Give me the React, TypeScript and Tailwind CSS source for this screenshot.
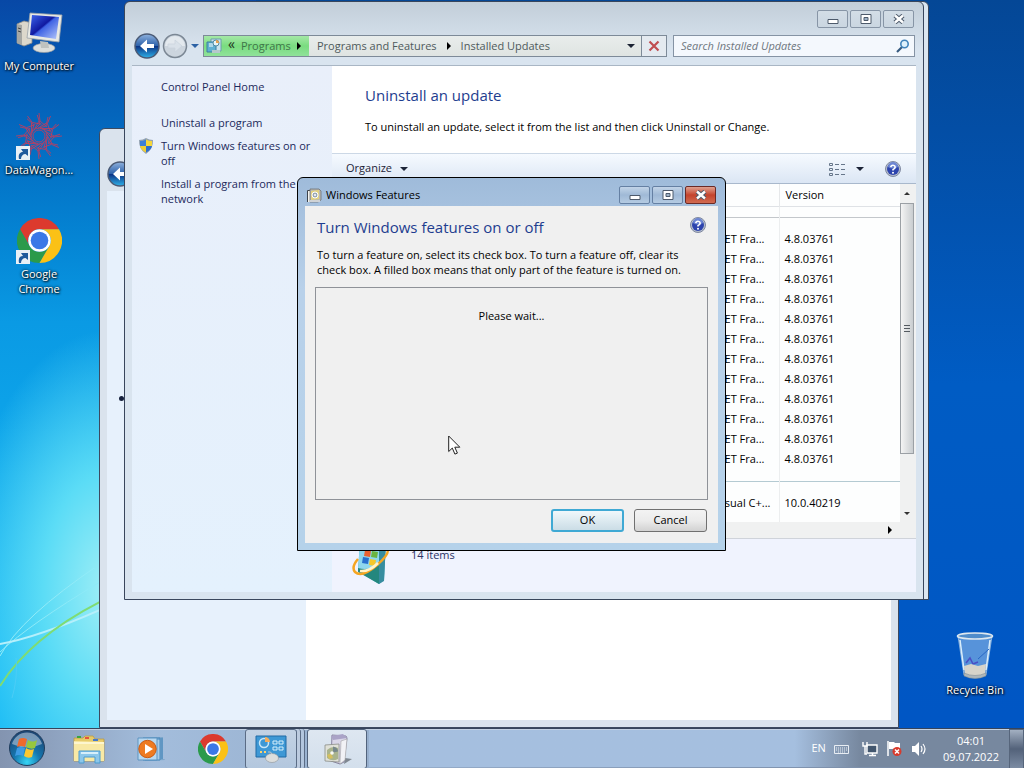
import React from "react";

const updates = Array.from({ length: 12 }, (_, i) => ({
  id: i,
  name: ".NET Fra...",
  version: "4.8.03761",
}));

const Chrome: React.FC<{ className: string }> = ({ className }) => (
  <svg viewBox="0 0 48 48" className={className}>
    <path fill="#dc3a2e" d="M24 12H44.8A24 24 0 0 0 3.2 12L13.6 30A12 12 0 0 1 24 12z" />
    <path fill="#2b9a4b" d="M13.6 30L3.2 12A24 24 0 0 0 24 48L34.4 30A12 12 0 0 1 13.6 30z" />
    <path fill="#fbc116" d="M34.4 30L24 48A24 24 0 0 0 44.8 12H24A12 12 0 0 1 34.4 30z" />
    <circle cx="24" cy="24" r="12" fill="#fff" />
    <circle cx="24" cy="24" r="9.4" fill="#3b78e7" />
  </svg>
);

const Computer = () => (
  <svg viewBox="0 0 48 44" className="h-11 w-12">
    <defs>
      <linearGradient id="screen" x1="0" y1="0" x2="1" y2="1">
        <stop offset="0" stopColor="#3d66ee" />
        <stop offset=".45" stopColor="#1019a0" />
        <stop offset=".5" stopColor="#3f63e4" />
        <stop offset="1" stopColor="#b7c9fb" />
      </linearGradient>
    </defs>
    <path d="M2 14l7-3 8 2v20l-8 3-7-3z" fill="#dcd8cc" stroke="#8e8c86" strokeWidth=".8" />
    <path d="M2 14l5 1v20l-5-2z" fill="#a5a7a4" />
    <path d="M3 18l3 1M3 21l3 1" stroke="#444" />
    <ellipse cx="29" cy="38" rx="11" ry="4.500" fill="#dcdedb" stroke="#999" strokeWidth=".6" />
    <path d="M25 31l8 1 1 6h-8z" fill="#bfc2bf" />
    <path d="M15 3l32 2-3 27-32-4z" fill="#e8e9e4" stroke="#9ba2a8" strokeWidth=".8" />
    <path d="M17 5l27 2-3 22-26-4z" fill="url(#screen)" />
  </svg>
);

const Rosette = () => (
  <svg viewBox="0 0 48 48" className="h-12 w-12" fill="none" stroke="#c43c5c" strokeWidth=".8">
    {Array.from({ length: 12 }, (_, i) => (
      <g key={i} transform={`rotate(${i * 30} 24 24)`}>
        <path d="M24 1l1 8 7 6M24 9l-5 9M21 17l10-3 2-9" />
      </g>
    ))}
    <circle cx="24" cy="24" r="6" />
  </svg>
);

const Shortcut = () => (
  <svg viewBox="0 0 14 14" className="absolute bottom-0 left-px h-3.5 w-3.5">
    <path d="M0 0h14v14H0z" fill="#e9f0f6" />
    <path d="M3 13C2 8 4 6 7 6L5 3h7v7L9.500 8C7 8 5 10 5 13z" fill="#1f5a9c" />
  </svg>
);

const Bin = () => (
  <svg viewBox="0 0 38 48" className="h-12 w-[38px]">
    <path d="M2 4l6 39q11 6 22 0l6-39z" fill="#9fc4ec" fillOpacity=".55" stroke="#9fc0e0" strokeWidth=".8" />
    <path d="M4 8l4 30M34 8l-4 30" stroke="#d9edfa" strokeWidth="1.500" />
    <path d="M22 27l11-10" stroke="#2867c5" fill="none" />
    <path d="M10 31l4-5 3 6 5-2" stroke="#4a4fc5" strokeWidth="1.500" fill="none" />
    <path d="M8 34l7-2 7 2 8-2-1 11q-11 5-20 0z" fill="#d7d4ca" />
    <path d="M8 41q11 5 22 0v3q-11 5-22 0z" fill="#aeb7bb" stroke="#77848e" strokeWidth=".5" />
    <ellipse cx="19" cy="4" rx="17.500" ry="3" fill="#4f8ccb" stroke="#dde7ef" strokeWidth="1.600" />
  </svg>
);

const Shield = () => (
  <svg viewBox="0 0 16 16" className="h-4 w-4">
    <path d="M8 0q3 2 7 2 .5 9-7 14Q.5 11 1 2q4 0 7-2z" fill="#93a2b2" />
    <path d="M8 1.500V8H2V3q3 0 6-1.500z" fill="#3d7fd8" />
    <path d="M8 1.500V8h6V3q-3 0-6-1.500z" fill="#f5d63b" />
    <path d="M8 8v6.500Q3 12 2 8z" fill="#f0cf35" />
    <path d="M8 8v6.500Q13 12 14 8z" fill="#2e6ecb" />
  </svg>
);

const Help = () => (
  <svg viewBox="0 0 16 16" className="h-4 w-4">
    <circle cx="8" cy="8" r="7.500" fill="#b7bfce" stroke="#7e88a0" />
    <circle cx="8" cy="8" r="6" fill="#2d44ad" />
    <path d="M3 6a5 5 0 0 1 10 0q-5 3-10 0z" fill="#6d86d3" />
    <path d="M5.800 6.200Q6 4.200 8 4.200t2.200 1.800Q10.200 7.400 8 8.600V9.500" stroke="#fff" strokeWidth="1.600" fill="none" />
    <circle cx="8" cy="11.700" r="1" fill="#fff" />
  </svg>
);

const ProgramBox: React.FC<{ className: string }> = ({ className }) => (
  <svg viewBox="0 0 32 32" className={className}>
    <path d="M24 25l7 1-8 5z" fill="#7f8791" />
    <path d="M11 2l14 1 1 2-3 24-4 2-9-3z" fill="#d9d6e8" stroke="#7e7996" strokeWidth=".9" />
    <path d="M10 3l12-2 4 4-14 2z" fill="#aaa3c7" />
    <path d="M20 8l6-2-2 21-5 4z" fill="#f2f2f6" stroke="#999" strokeWidth=".5" />
    <path d="M4 12l14-1v18l-14-1z" fill="#e0e1d8" stroke="#8a8d88" strokeWidth=".8" />
    <path d="M6 17q5-5 11-2v11q-6 3-11-1z" fill="#a9b38d" />
    <path d="M12 13.500q5 1 5 5l-5 1z" fill="#76878b" />
    <path d="M6 22l4-2 2 5-4 1z" fill="#d4bf5e" />
    <circle cx="11" cy="20" r="1.800" fill="#f8f8f4" />
  </svg>
);

const FeaturesIcon = () => (
  <svg viewBox="0 0 16 16" className="h-4 w-4">
    <path d="M1.500 15V3.500h9V15" fill="#f4f4f0" stroke="#3e444c" />
    <path d="M4 2h9l2 2v9l-3 2H4z" fill="#b9b8b3" stroke="#6e7274" strokeWidth=".8" />
    <path d="M5 4l8-1v9l-8 1z" fill="#e3d27f" />
    <circle cx="9" cy="8" r="3" fill="#9aa8b5" stroke="#fff" />
    <circle cx="9" cy="8" r="1" fill="#fff" />
    <path d="M4 13h10v2H3z" fill="#d0d3d6" />
  </svg>
);

const PanelIcon = () => (
  <svg viewBox="0 0 16 16" className="h-4 w-4">
    <path d="M5 1h10v12H5z" fill="#c9e3ee" stroke="#6d9cac" />
    <path d="M1 4h9v10H1z" fill="#5fb0d2" stroke="#3f7fa0" />
    <path d="M3 6h6M3 8h4" stroke="#fff" />
    <circle cx="10" cy="5" r="3" fill="#e8f5f8" stroke="#508aa3" />
    <path d="M10 5V2a3 3 0 0 1 3 3z" fill="#e9a24e" />
    <path d="M6 12h8v3H6z" fill="#b5c9cc" />
  </svg>
);

const Updates = () => (
  <svg viewBox="0 0 40 46" className="h-[46px] w-10">
    <path d="M9 2l26 1-2 38-5 4L7 32z" fill="#3ca1b5" />
    <path d="M9 2l19 2v41L7 32z" fill="#8fd8ee" />
    <path d="M7 29q10 3 21-3v19L7 33z" fill="#24877e" />
    <path d="M28 4l7-1-2 39-5 3z" fill="#378da0" />
    <path d="M14 11l6 1-1 6-6-1z" fill="#ea6332" />
    <path d="M21 12l6 1-1 6-6-1z" fill="#6bb441" />
    <path d="M12 18l6 1-1 6-6-1z" fill="#2870ce" />
    <path d="M19 20l6 1-1 6-6-1z" fill="#f4c72b" />
    <path d="M7 20Q0 28 4 33q7 6 22-7 14-12 10-17-1-2-5-2" fill="none" stroke="#f5a623" strokeWidth="2.500" />
    <path d="M9 32q9 1 18-8" fill="none" stroke="#fff3c9" strokeWidth="2.500" />
  </svg>
);

const StartOrb = () => (
  <svg viewBox="0 0 38 38" className="h-[38px] w-[38px]">
    <defs>
      <radialGradient id="orb" cx=".5" cy=".9" r=".85">
        <stop offset="0" stopColor="#35d5f5" />
        <stop offset=".45" stopColor="#1576ae" />
        <stop offset="1" stopColor="#1c4675" />
      </radialGradient>
    </defs>
    <circle cx="19" cy="19" r="17.500" fill="url(#orb)" stroke="#203c5c" />
    <path d="M4 15a15.500 15.500 0 0 1 30 0q-15 7-30 0z" fill="#c6d5e4" fillOpacity=".55" />
    <path d="M11 10q4-2 8 0l-2 8q-4-2-8 0z" fill="#ee6a2c" />
    <path d="M20 11q5 3 9 0l-2 8q-4 2-9-1z" fill="#97c83e" />
    <path d="M9 19q4-2 8 0l-2 8q-4-2-8 0z" fill="#3e9be4" />
    <path d="M18 19q4 3 8 1l-2 8q-4 2-8-1z" fill="#fbc831" />
  </svg>
);

const Explorer = () => (
  <svg viewBox="0 0 32 30" className="h-[30px] w-8">
    <path d="M1 4h9l2-2h8l2 3h9v22H1z" fill="#e6ca69" stroke="#b89a47" strokeWidth=".8" />
    <path d="M4 2h4v2H4z" fill="#3ba33f" />
    <path d="M12 3h4v2h-4z" fill="#e4553c" />
    <path d="M20 5h5v2h-5z" fill="#4479cd" />
    <path d="M1 7l30 1v19H1z" fill="#f8e9a5" />
    <path d="M1 9h30" stroke="#fdf6cf" strokeWidth="2" />
    <path d="M6 17h21v12h-5v-6H11v6H6z" fill="#8cc7ea" stroke="#4b9bd0" />
    <path d="M8 19h17" stroke="#d6effb" strokeWidth="2" />
  </svg>
);

const MediaPlayer = () => (
  <svg viewBox="0 0 28 26" className="h-[26px] w-7">
    <path d="M8 2l18-1v22l4 1-22 1z" fill="#7ba6cb" />
    <path d="M6 2h17v22H6zM20 3h3M25 2v21" fill="#a8cce9" stroke="#4787bb" />
    <path d="M1 2h19v22H1z" fill="#b8d8f0" stroke="#5d94c1" />
    <circle cx="10.500" cy="13" r="8.700" fill="#ee7b22" stroke="#c85c16" />
    <path d="M8 8l8 5-8 5z" fill="#fff" />
  </svg>
);

const ControlPanel = () => (
  <svg viewBox="0 0 32 30" className="h-[30px] w-8">
    <path d="M1 2h30v21H1z" fill="#3e98d5" stroke="#206aa5" />
    <circle cx="9" cy="9" r="4.500" fill="none" stroke="#c7e6f8" strokeWidth="1.500" />
    <path d="M10 8V3a5 5 0 0 1 5 5z" fill="#f3ad5d" />
    <path d="M5 18h2M9 18h2" stroke="#ffd36c" strokeWidth="2" />
    <path d="M18 7h4v3h-4zM24 7h4v3h-4zM18 13h4v3h-4zM24 13h4v3h-4z" fill="none" stroke="#d5effb" />
    <ellipse cx="17" cy="24" rx="6.500" ry="4.500" fill="#dcdedd" stroke="#8d9499" strokeWidth=".6" />
    <path d="M17 20q-1-3-4-2" stroke="#c2c6c8" fill="none" />
  </svg>
);

const BackArrow = () => (
  <svg viewBox="0 0 26 26" className="h-[26px] w-[26px]">
    <defs>
      <linearGradient id="nav" x1="0" y1="0" x2="0" y2="1">
        <stop offset="0" stopColor="#8fb2de" />
        <stop offset=".48" stopColor="#2f63ab" />
        <stop offset=".52" stopColor="#0c3586" />
        <stop offset="1" stopColor="#2fb3ea" />
      </linearGradient>
    </defs>
    <circle cx="13" cy="13" r="12" fill="url(#nav)" stroke="#4b5b76" strokeWidth="1.500" />
    <path d="M6 13l7-6.500v4.500h7v4h-7v4.500z" fill="#fff" />
  </svg>
);

const ForwardArrow = () => (
  <svg viewBox="0 0 26 26" className="h-[26px] w-[26px]">
    <circle cx="13" cy="13" r="11.500" fill="#ccd5de" stroke="#7b8794" strokeWidth="1.500" />
    <path d="M3 13a10 10 0 0 1 20 0z" fill="#e3e9ee" />
    <path d="M20 13l-7-6v4H6v4h7v4z" fill="#d9e1e9" stroke="#c8d2dc" strokeWidth=".7" />
  </svg>
);

const Caret: React.FC<{ className?: string }> = ({ className }) => (
  <svg viewBox="0 0 8 4" className={`h-1 w-2 ${className ?? ""}`}>
    <path d="M0 0h8L4 4z" fill="currentColor" />
  </svg>
);

const ScrollCaret: React.FC<{ className?: string }> = ({ className }) => (
  <svg viewBox="0 0 6 3" className={`h-[3px] w-1.5 text-[#333] ${className ?? ""}`}>
    <path d="M0 0h6L3 3z" fill="currentColor" />
  </svg>
);

const RightCaret = () => (
  <svg viewBox="0 0 4 8" className="h-2 w-1">
    <path d="M0 0v8l4-4z" fill="#000" />
  </svg>
);

const captionTones = {
  idle: "border-[#8795a6] bg-linear-to-b from-[#d3dde6] to-[#cad6e1]",
  active: "border-[#6580a3] bg-linear-to-b from-[#c2d4e8] via-[#9fb9d6] to-[#b5cbe2]",
  close: "border-[#6b2a26] bg-linear-to-b from-[#dea090] via-[#c4432d] to-[#d06a50]",
};

const CaptionButtons: React.FC<{ active?: boolean }> = ({ active }) => {
  const tone = active ? captionTones.active : captionTones.idle;
  const base = "flex h-[18px] w-[31px] items-center justify-center rounded-[2px] border";
  return (
    <div className="flex gap-0.5">
      <button aria-label="Minimize" className={`${base} ${tone}`}>
        <svg viewBox="0 0 12 10" className="h-2.5 w-3">
          <path d="M1 5.500h10v4H1z" fill="#fff" stroke="#4d5a6b" />
        </svg>
      </button>
      <button aria-label="Maximize" className={`${base} ${tone}`}>
        <svg viewBox="0 0 12 10" className="h-2.5 w-3">
          <path d="M1 .5h10v9H1z" fill="#fff" stroke="#4d5a6b" />
          <path d="M4 3.500h4v3H4z" fill="#9fb3c8" stroke="#4d5a6b" />
        </svg>
      </button>
      <button aria-label="Close" className={`${base} ${active ? captionTones.close : tone}`}>
        <svg viewBox="0 0 12 10" className="h-2.5 w-3">
          <path d="M2 1.500l8 7M10 1.500l-8 7" stroke="#4d5a6b" strokeWidth="4.500" />
          <path d="M2 1.500l8 7M10 1.500l-8 7" stroke="#fff" strokeWidth="2.400" />
        </svg>
      </button>
    </div>
  );
};

const DesktopIcon: React.FC<{
  label: string;
  shortcut?: boolean;
  children: React.ReactNode;
}> = ({ label, shortcut, children }) => (
  <button className="flex h-[104px] w-[78px] flex-col items-center">
    <span className="relative flex h-12 w-12 items-center justify-center">
      {children}
      {shortcut && <Shortcut />}
    </span>
    <span className="mt-0.5 text-center text-[11px] leading-[15px] whitespace-pre-line text-white [text-shadow:1px_1px_2px_#000,0_0_3px_#000]">
      {label}
    </span>
  </button>
);

const Wallpaper = () => (
  <div className="absolute inset-0 bg-linear-to-b from-[#044796] via-[#005cc4] to-[#0055c4]">
    <div className="absolute inset-y-0 left-0 w-1/4 bg-linear-to-b from-[#0848a6] via-[#0a9ae4] via-42% to-[#14b8f5] to-85%" />
    <div className="absolute inset-y-0 left-0 w-1/4 bg-[radial-gradient(ellipse_150px_260px_at_110px_590px,#a2eff6,#5bdcf6_45%,transparent)]" />
    <svg viewBox="0 0 100 200" className="absolute bottom-0 left-0 h-[200px] w-[100px]" fill="none">
      <path d="M0 84Q30 56 100 14" stroke="#8deaf8" />
      <path d="M0 88Q20 50 100 -4" stroke="#92ebf8" />
      <path d="M0 76Q36 70 100 42" stroke="#b5effb" strokeWidth="2" />
      <path d="M0 118Q30 70 100 34" stroke="#7fdc72" strokeWidth="2" />
      <path d="M12 130Q18 110 16 90" stroke="#4bcdf6" />
    </svg>
  </div>
);

const BackWindow = () => (
  <section className="absolute top-32 right-[125px] bottom-10 left-[99px] flex flex-col rounded-t-md border border-[#3d4a60] bg-[#dae3ed] p-[7px] pt-8">
    <div className="flex">
      <BackArrow />
    </div>
    <div className="mt-1 flex flex-1">
      <div className="w-[199px] bg-[#e7f1fc]" />
      <div className="flex-1 bg-white" />
    </div>
    <span className="absolute top-[267px] left-[19px] h-[5px] w-[5px] rounded-full bg-[#16203c]" />
  </section>
);

const sideLinks = [
  { label: "Uninstall a program", shield: false },
  { label: "Turn Windows features on or off", shield: true },
  { label: "Install a program from the network", shield: false },
];

const Sidebar = () => (
  <nav className="w-[200px] shrink-0 bg-linear-to-b from-[#e9effa] to-[#e4f1fd] pt-[13px] pr-2 text-[#1c2a5c]">
    <a href="#home" className="ml-[29px] block leading-[15px]">
      Control Panel Home
    </a>
    <ul className="mt-[21px] flex flex-col gap-2">
      {sideLinks.map(({ label, shield }) => (
        <li key={label} className="flex">
          <span className="w-[29px] shrink-0 pl-1.5">{shield && <Shield />}</span>
          <a href="#task" className="w-[160px] leading-[15px]">
            {label}
          </a>
        </li>
      ))}
    </ul>
  </nav>
);

const AddressBar = () => (
  <div className="flex items-center pr-px pl-0.5">
    <button aria-label="Back">
      <BackArrow />
    </button>
    <button aria-label="Forward" className="ml-0.5">
      <ForwardArrow />
    </button>
    <button aria-label="Recent pages" className="mr-1 ml-[3px] text-[#2d62a5]">
      <Caret />
    </button>
    <div className="flex h-[22px] flex-1 border border-[#7d8a98] bg-linear-to-b from-[#e9edec] to-[#dfe4e2] text-[#4f5a5c]">
      <div className="flex w-[105px] items-center gap-1.5 bg-linear-to-b from-[#a4e8a6] via-[#79dc7f] to-[#90e29a] pl-0.5">
        <PanelIcon />
        <span className="-mt-1 text-[14px] leading-4 text-[#1f3322]">«</span>
        <button className="text-[#3f7549]">Programs</button>
        <RightCaret />
      </div>
      <div className="flex flex-1 items-center gap-2.5 pl-2">
        <button>Programs and Features</button>
        <RightCaret />
        <button>Installed Updates</button>
      </div>
      <button aria-label="Previous locations" className="px-1.5 text-[#1b2333]">
        <Caret />
      </button>
      <button aria-label="Stop" className="flex w-[25px] items-center justify-center border-l border-[#7d8a98] bg-[#e4eaf0]">
        <svg viewBox="0 0 12 12" className="h-3 w-3">
          <path d="M1.500 1.500l9 9M10.500 1.500l-9 9" stroke="#c04d50" strokeWidth="2.200" />
        </svg>
      </button>
    </div>
    <label className="ml-1.5 flex h-[22px] w-[242px] items-center border border-[#8593a4] bg-[#f4f8fd] pr-1 pl-[7px]">
      <input
        aria-label="Search Installed Updates"
        placeholder="Search Installed Updates"
        className="min-w-0 flex-1 italic outline-none placeholder:text-[#6f7780]"
      />
      <svg viewBox="0 0 14 14" className="h-3.5 w-3.5" fill="none">
        <path d="M6 8l-5 5" stroke="#35597f" strokeWidth="2.200" />
        <circle cx="8.500" cy="5" r="3.700" fill="#dff1fb" stroke="#4183ba" strokeWidth="1.600" />
      </svg>
    </label>
  </div>
);

const UpdateTable = () => (
  <table className="w-full border-collapse">
    <thead>
      <tr className="h-[22px] border-b border-[#dfe2e6]">
        <th aria-label="Program" />
        <th className="w-[121px] border-l border-[#e6e8ea] pl-1.5 text-left font-normal">Version</th>
      </tr>
    </thead>
    <tbody>
      <tr className="h-[11px] border-b border-[#c3c7cb]">
        <td />
        <td className="border-l border-[#eceeef]" />
      </tr>
      <tr className="h-3">
        <td />
        <td className="border-l border-[#eceeef]" />
      </tr>
      {updates.map(({ id, name, version }) => (
        <tr key={id} className="h-5">
          <td className="pr-3.5 text-right">{name}</td>
          <td className="border-l border-[#eceeef] pl-[5px]">{version}</td>
        </tr>
      ))}
      <tr className="h-3 border-b border-[#b4cad2]">
        <td />
        <td className="border-l border-[#eceeef]" />
      </tr>
      <tr className="h-3">
        <td />
        <td className="border-l border-[#eceeef]" />
      </tr>
      <tr className="h-5">
        <td className="pr-2 text-right">Visual C+...</td>
        <td className="border-l border-[#eceeef] pl-[5px]">10.0.40219</td>
      </tr>
      <tr className="h-[9px]">
        <td />
        <td className="border-l border-[#eceeef]" />
      </tr>
    </tbody>
  </table>
);

const UpdatesWindow = () => (
  <section className="absolute top-px right-[100px] left-[124px] flex h-[599px] flex-col rounded-t-md border border-[#39465c] bg-linear-to-b from-[#c2ced9] to-[#d9e4ef] to-8% px-[7px] pb-[7px]">
    <header className="flex h-[31px] justify-end pt-2 pr-0.5">
      <CaptionButtons />
    </header>
    <AddressBar />
    <div className="mt-1.5 flex min-h-0 flex-1 border-t border-[#a9b6c4]">
      <Sidebar />
      <main className="flex min-w-0 flex-1 flex-col">
        <div className="h-[88px] border-b border-[#ccd8e6] bg-white pl-[33px]">
          <h1 className="pt-[19px] text-[15px] leading-5 text-[#1e3d8f]">Uninstall an update</h1>
          <p className="mt-3.5 leading-[15px]">
            To uninstall an update, select it from the list and then click Uninstall or Change.
          </p>
        </div>
        <div className="flex h-[30px] items-center border-b border-[#a8b8cc] bg-linear-to-b from-[#f6faff] to-[#dbe6f4] pr-[15px] pl-3.5 text-[#1c2437]">
          <button className="flex items-center gap-2">
            Organize
            <Caret />
          </button>
          <button aria-label="Change view" className="ml-auto flex items-center gap-[11px]">
            <svg viewBox="0 0 16 14" className="h-3.5 w-4" fill="none" stroke="#66768a">
              <path d="M.5 1.500h3v2h-3zM.5 6.500h3v2h-3zM.5 11.500h3v2h-3z" />
              <path d="M6 2.500h4M12 2.500h4M6 7.500h4M12 7.500h4M6 12.500h4M12 12.500h4" />
            </svg>
            <Caret />
          </button>
          <button aria-label="Help" className="ml-[21px]">
            <Help />
          </button>
        </div>
        <div className="flex bg-[#fdfefe]">
          <div className="min-w-0 flex-1">
            <UpdateTable />
          </div>
          <div className="flex w-4 flex-col items-center bg-[#f0f1f1] pt-2 pr-0.5 pb-[7px]">
            <ScrollCaret className="rotate-180" />
            <div className="mt-2 flex h-[251px] w-3.5 flex-col items-center justify-center gap-0.5 border border-[#9ba0a5] bg-linear-to-r from-[#f4f4f4] to-[#c9cdd0]">
              <span className="h-px w-1.5 bg-[#545a60]" />
              <span className="h-px w-1.5 bg-[#545a60]" />
              <span className="h-px w-1.5 bg-[#545a60]" />
            </div>
            <ScrollCaret className="mt-auto" />
          </div>
        </div>
        <div className="flex h-[17px] shrink-0 items-center justify-end border-b border-[#cfd3da] bg-[#f0f1f1] pr-6">
          <RightCaret />
        </div>
        <div className="flex flex-1 gap-5 bg-[#f0f3fe] pl-[19px] text-[#2b3265]">
          <Updates />
          <p className="pt-2 leading-[15px]">14 items</p>
        </div>
      </main>
    </div>
  </section>
);

const FeaturesDialog = () => (
  <section
    role="dialog"
    aria-labelledby="features-title"
    className="absolute top-[177px] left-[297px] flex w-[429px] flex-col rounded-t-md border border-black bg-linear-to-b from-[#9fbbda] via-[#b9d1ea] via-30% to-[#b5d2ea] px-[7px] pb-[7px]"
  >
    <header className="flex h-7 pr-0.5">
      <div className="flex flex-1 items-center gap-1 pt-1.5 pl-px">
        <FeaturesIcon />
        <h2 id="features-title">Windows Features</h2>
      </div>
      <div className="pt-2">
        <CaptionButtons active />
      </div>
    </header>
    <div className="bg-[#f0f0f0] px-2.5 pt-[11px] pb-[11px]">
      <div className="flex justify-between pr-0.5 pl-0.5">
        <h3 className="text-[15px] leading-5 text-[#1e3d8f]">Turn Windows features on or off</h3>
        <button aria-label="Help" className="h-4 w-4">
          <Help />
        </button>
      </div>
      <p className="mt-2.5 pl-0.5 leading-[15px]">
        To turn a feature on, select its check box. To turn a feature off, clear its
        <br />
        check box. A filled box means that only part of the feature is turned on.
      </p>
      <div className="mt-[10px] h-[213px] border border-[#8f9298] pt-5 text-center leading-[15px]">
        Please wait...
      </div>
      <div className="mt-[9px] flex justify-end gap-2.5 pr-px">
        <button className="h-[23px] w-[73px] rounded-[3px] border-2 border-[#3fa9d4] bg-linear-to-b from-[#f0f8fb] to-[#cbdde6]">
          OK
        </button>
        <button className="h-[23px] w-[73px] rounded-[3px] border border-[#707070] bg-linear-to-b from-[#f3f3f3] via-[#ebebeb] to-[#d2d2d2]">
          Cancel
        </button>
      </div>
    </div>
  </section>
);

const Tray = () => (
  <div className="ml-auto flex items-center text-white">
    <span>EN</span>
    <svg viewBox="0 0 16 10" className="ml-2 h-2.5 w-4" fill="none" stroke="#e8edf3">
      <path d="M.5 1.500h14v8H.5z" />
      <path d="M2 4h11M2 6h11M4 8h7" strokeDasharray="1 1" />
    </svg>
    <svg viewBox="0 0 16 16" className="ml-3 h-4 w-4" fill="none">
      <path d="M5 4h10v8H5z" fill="#42566e" stroke="#fff" strokeWidth="1.400" />
      <path d="M7 14.500h7M10.500 12v2" stroke="#fff" strokeWidth="1.500" />
      <path d="M1 1v4h4V1M3 5v8h2" stroke="#fff" strokeWidth="1.400" />
    </svg>
    <svg viewBox="0 0 17 17" className="ml-2 h-[17px] w-[17px]" fill="none">
      <path d="M2 1v15" stroke="#fff" strokeWidth="1.500" />
      <path d="M3 2h5l1 1h5v7H9L8 9H3z" fill="#fff" />
      <circle cx="11" cy="11.500" r="4.500" fill="#d83a2c" />
      <path d="M9 9.500l4 4M13 9.500l-4 4" stroke="#fff" strokeWidth="1.500" />
    </svg>
    <svg viewBox="0 0 16 16" className="ml-2 h-4 w-4" fill="none">
      <path d="M1 5h3l4-4v14l-4-4H1z" fill="#fff" />
      <path d="M10 5q2 3 0 6M12 3q4 5 0 10" stroke="#fff" strokeWidth="1.200" />
    </svg>
    <time className="mr-2.5 ml-4 text-center leading-4">
      04:01
      <br />
      09.07.2022
    </time>
    <button
      aria-label="Show desktop"
      className="h-10 w-[15px] border border-[#56657b] bg-linear-to-b from-[#a3b0c2] via-[#53627a] to-[#7c8ca3]"
    />
  </div>
);

const Taskbar = () => {
  const item = "flex h-10 w-[60px] items-center justify-center";
  return (
    <footer className="absolute inset-x-0 bottom-0 flex h-10 border-t border-[#36445c] bg-linear-to-r from-[#8394b0] via-[#a3bddc] via-15% to-[#74859f] shadow-[inset_0_1px_0_#c4d2e3]">
      <div className="absolute inset-y-px right-0 left-[36%] bg-linear-to-r from-[#a5bfdf] via-[#a5bfdf] via-65% to-[#77889f] to-75%" />
      <div className="relative flex w-full gap-0.5">
        <button aria-label="Start" className="flex w-[57px] justify-center pr-1">
          <StartOrb />
        </button>
        <button aria-label="Windows Explorer" className={item}>
          <Explorer />
        </button>
        <button aria-label="Windows Media Player" className={item}>
          <MediaPlayer />
        </button>
        <button aria-label="Google Chrome" className={item}>
          <Chrome className="h-[30px] w-[30px]" />
        </button>
        <button aria-label="Control Panel" className="flex h-10 w-[60px]">
          <span className="flex h-full w-[52px] items-center justify-center rounded-[3px] border border-[#5b6c85] bg-linear-to-b from-[#c3d2e4] to-[#b3c7de]">
            <ControlPanel />
          </span>
          <span className="h-full w-1 rounded-r-[3px] border-r border-[#5b6c85] bg-[#bccbdf]" />
          <span className="h-full w-1 rounded-r-[3px] border-r border-[#5b6c85] bg-[#b3c6de]" />
        </button>
        <button
          aria-label="Windows Features"
          className="flex h-10 w-[60px] items-center justify-center rounded-[3px] border border-[#52637c] bg-linear-to-b from-[#dee7f1] to-[#d3dfec]"
        >
          <ProgramBox className="h-8 w-8" />
        </button>
        <Tray />
      </div>
    </footer>
  );
};

const App = () => {
  return (
    <div className="relative h-screen min-h-[640px] overflow-hidden font-['Open_Sans','Noto_Sans',sans-serif] text-[11px] text-black">
      <Wallpaper />
      <div className="absolute top-2 left-0 flex flex-col">
        <DesktopIcon label="My Computer">
          <Computer />
        </DesktopIcon>
        <DesktopIcon label="DataWagon..." shortcut>
          <Rosette />
        </DesktopIcon>
        <DesktopIcon label={"Google\nChrome"} shortcut>
          <Chrome className="h-[45px] w-[45px]" />
        </DesktopIcon>
      </div>
      <div className="absolute right-2.5 bottom-8">
        <DesktopIcon label="Recycle Bin">
          <Bin />
        </DesktopIcon>
      </div>
      <BackWindow />
      {/* edge of the window stacked under the updates list */}
      <div className="absolute top-px right-[95px] left-[200px] h-[599px] rounded-tr-md border border-[#39465c] bg-[#dbe6f1]" />
      <UpdatesWindow />
      <FeaturesDialog />
      <Taskbar />
      <svg viewBox="0 0 13 20" className="absolute top-[435px] left-[448px] h-5 w-[13px]">
        <path d="M.7 1v15.500l3.600-3.400 2.600 6 2.500-1-2.600-5.900h5z" fill="#fff" stroke="#222" />
      </svg>
    </div>
  );
};

export default App;
